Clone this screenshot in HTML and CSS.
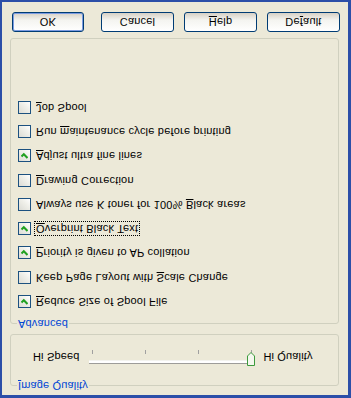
FILE: index.html
```html
<!DOCTYPE html>
<html lang="en">
<head>
  <meta charset="UTF-8" />
  <title>Advanced Options</title>
  <link rel="stylesheet" href="styles.css">
</head>
<body>
  <!-- the whole dialog is shown mirrored top-to-bottom -->
  <div class="dialog">
    <fieldset class="group quality">
      <legend><u>I</u>mage Quality</legend>
      <div class="slider-row">
        <span class="end-label">Hi Speed</span>
        <div class="slider">
          <div class="ticks">
            <span></span><span></span><span></span><span></span>
          </div>
          <div class="track"></div>
          <div class="thumb">
            <svg width="8" height="14" viewBox="0 0 8 14">
              <path d="M0.5 0.5 H7.5 V10 L4 13.5 L0.5 10 Z" fill="#f4f7ee" stroke="#3c9a3c"/>
            </svg>
          </div>
        </div>
        <span class="end-label">Hi Quality</span>
      </div>
    </fieldset>

    <fieldset class="group advanced">
      <legend>Advanced</legend>
      <div class="options" id="options"></div>
    </fieldset>

    <div class="buttons">
      <button class="btn default">OK</button>
      <button class="btn">Cancel</button>
      <button class="btn"><u>H</u>elp</button>
      <button class="btn">De<u>f</u>ault</button>
    </div>
  </div>

  <script>
    // Option list, drawn from the bottom of the dialog upwards
    const options = [
      { label: '<u>R</u>educe Size of Spool File', on: true },
      { label: 'Keep Page Layout with <u>S</u>cale Change', on: false },
      { label: '<u>P</u>riority is given to AP collation', on: true },
      { label: '<u>O</u>verprint Black Text', on: true, focus: true },
      { label: 'Always use K toner for 100% <u>B</u>lack areas', on: false },
      { label: '<u>D</u>rawing Correction', on: false },
      { label: '<u>A</u>djust ultra fine lines', on: true },
      { label: 'Run <u>m</u>aintenance cycle before printing', on: false },
      { label: '<u>J</u>ob Spool', on: false }
    ];

    const list = document.getElementById('options');
    options.forEach(o => {
      const row = document.createElement('div');
      row.className = 'option';
      const box = document.createElement('span');
      box.className = 'check' + (o.on ? ' on' : '');
      if (o.on) {
        box.innerHTML = '<svg width="7" height="7" viewBox="0 0 7 7"><path d="M0.5 2.5 L2.8 4.8 L6.5 1" fill="none" stroke="#21a121" stroke-width="2"/></svg>';
      }
      const text = document.createElement('span');
      text.className = 'text' + (o.focus ? ' focus' : '');
      text.innerHTML = o.label;
      row.appendChild(box);
      row.appendChild(text);
      list.appendChild(row);
    });
  </script>
</body>
</html>
```

FILE: styles.css
```css
body {
  margin: 0;
  background: #ece9d8;
  font-family: 'Liberation Sans', Arial, sans-serif;
  font-size: 11px;
  color: #000;
}

.dialog {
  box-sizing: border-box;
  width: 351px;
  height: 398px;
  background: #ece9d8;
  border-style: solid;
  border-color: #2c4fa8;
  border-width: 3px 3px 2px 2px;
  padding: 3px 9px 0 8px;
  display: flex;
  flex-direction: column;
  transform: scaleY(-1);
}

.group {
  margin: 0;
  border: 1px solid #d0d0bf;
  border-radius: 3px;
  padding: 0;
  min-width: 0;
}

.group legend {
  color: #0046d5;
  padding: 0 1px;
  margin-left: 6px;
  line-height: 12px;
  letter-spacing: 0.15px;
}

.quality {
  height: 58px;
  box-sizing: border-box;
}

.slider-row {
  display: flex;
  align-items: center;
  padding: 10px 0 0 22px;
}

.end-label {
  line-height: 13px;
  letter-spacing: 0.15px;
}

.slider {
  width: 170px;
  height: 26px;
  margin: 0 6px 0 8px;
  display: flex;
  flex-direction: column;
  justify-content: center;
  position: relative;
}

.track {
  order: 1;
  height: 2px;
  margin: 0 2px;
  background: #fff;
  border-top: 1px solid #9d9c99;
  border-bottom: 1px solid #f3f3ef;
}

.ticks {
  order: 2;
  display: flex;
  justify-content: space-between;
  margin: 6px 5px 0 5px;
}

.ticks span {
  width: 1px;
  height: 4px;
  background: #a0a0a0;
}

.thumb {
  position: absolute;
  right: 2px;
  top: 4px;
  line-height: 0;
}

.advanced {
  margin-top: 4px;
  height: 292px;
  box-sizing: border-box;
}

.options {
  display: flex;
  flex-direction: column;
  gap: 11px;
  padding: 10px 0 0 7px;
}

.option {
  display: flex;
  align-items: center;
  height: 13.25px;
}

.check {
  box-sizing: border-box;
  width: 13px;
  height: 13px;
  border: 1px solid #1c5180;
  background: linear-gradient(135deg, #dcdcd5 0%, #f0f0ea 60%, #fff 100%);
  display: flex;
  align-items: center;
  justify-content: center;
  flex: none;
}

.text {
  margin-left: 4px;
  line-height: 13px;
  padding: 0 1px;
  white-space: nowrap;
  letter-spacing: 0.2px;
}

.text.focus {
  outline: 1px dotted #000;
  outline-offset: 0;
}

.buttons {
  display: flex;
  gap: 10px;
  margin-top: 6px;
  padding-left: 2px;
}

.btn {
  box-sizing: border-box;
  width: 73px;
  height: 20px;
  flex: none;
  font-family: 'Liberation Sans', Arial, sans-serif;
  font-size: 11px;
  letter-spacing: 0.2px;
  color: #000;
  padding: 0;
  border: 1px solid #003c74;
  border-radius: 3px;
  background: linear-gradient(180deg, #fff 0%, #f4f4f0 60%, #d6d0c5 100%);
}

.btn.default {
  width: 72px;
  margin-right: 7px;
  box-shadow: inset 0 0 0 1px #7b9be1;
}
```
